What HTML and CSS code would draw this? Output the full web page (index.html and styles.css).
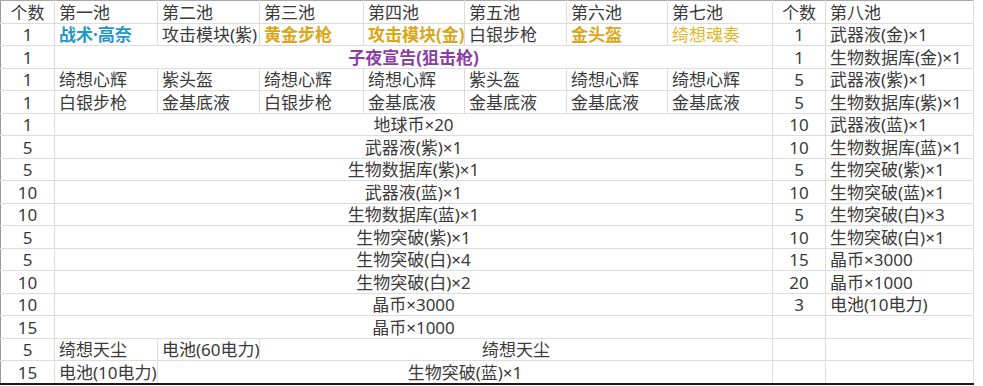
FILE: index.html
```html
<!DOCTYPE html>
<html lang="zh-CN">
<head>
    <meta charset="UTF-8">
    <meta name="viewport" content="width=device-width, initial-scale=1.0">
    <title>奖池</title>
    <link rel="stylesheet" href="styles.css">
</head>
<body>

<table class="sheet">
    <colgroup>
        <col class="c-num">
        <col class="c1"><col class="c2"><col class="c3"><col class="c4">
        <col class="c5"><col class="c6"><col class="c7">
        <col class="c-num2">
        <col class="c8">
    </colgroup>
    <tr>
        <td class="num">个数</td>
        <td>第一池</td><td>第二池</td><td>第三池</td><td>第四池</td>
        <td>第五池</td><td>第六池</td><td>第七池</td>
        <td class="num">个数</td><td>第八池</td>
    </tr>
    <tr>
        <td class="num">1</td>
        <td class="blue bold">战术·高奈</td>
        <td>攻击模块(紫)</td>
        <td class="gold bold">黄金步枪</td>
        <td class="gold bold">攻击模块(金)</td>
        <td>白银步枪</td>
        <td class="gold bold">金头盔</td>
        <td class="gold light">绮想魂奏</td>
        <td class="num">1</td><td>武器液(金)×1</td>
    </tr>
    <tr>
        <td class="num">1</td>
        <td colspan="7" class="mid purple bold">子夜宣告(狙击枪)</td>
        <td class="num">1</td><td>生物数据库(金)×1</td>
    </tr>
    <tr>
        <td class="num">1</td>
        <td>绮想心辉</td><td>紫头盔</td><td>绮想心辉</td><td>绮想心辉</td>
        <td>紫头盔</td><td>绮想心辉</td><td>绮想心辉</td>
        <td class="num">5</td><td>武器液(紫)×1</td>
    </tr>
    <tr>
        <td class="num">1</td>
        <td>白银步枪</td><td>金基底液</td><td>白银步枪</td><td>金基底液</td>
        <td>金基底液</td><td>金基底液</td><td>金基底液</td>
        <td class="num">5</td><td>生物数据库(紫)×1</td>
    </tr>
    <tr>
        <td class="num">1</td><td colspan="7" class="mid">地球币×20</td>
        <td class="num">10</td><td>武器液(蓝)×1</td>
    </tr>
    <tr>
        <td class="num">5</td><td colspan="7" class="mid">武器液(紫)×1</td>
        <td class="num">10</td><td>生物数据库(蓝)×1</td>
    </tr>
    <tr>
        <td class="num">5</td><td colspan="7" class="mid">生物数据库(紫)×1</td>
        <td class="num">5</td><td>生物突破(紫)×1</td>
    </tr>
    <tr>
        <td class="num">10</td><td colspan="7" class="mid">武器液(蓝)×1</td>
        <td class="num">10</td><td>生物突破(蓝)×1</td>
    </tr>
    <tr>
        <td class="num">10</td><td colspan="7" class="mid">生物数据库(蓝)×1</td>
        <td class="num">5</td><td>生物突破(白)×3</td>
    </tr>
    <tr>
        <td class="num">5</td><td colspan="7" class="mid">生物突破(紫)×1</td>
        <td class="num">10</td><td>生物突破(白)×1</td>
    </tr>
    <tr>
        <td class="num">5</td><td colspan="7" class="mid">生物突破(白)×4</td>
        <td class="num">15</td><td>晶币×3000</td>
    </tr>
    <tr>
        <td class="num">10</td><td colspan="7" class="mid">生物突破(白)×2</td>
        <td class="num">20</td><td>晶币×1000</td>
    </tr>
    <tr>
        <td class="num">10</td><td colspan="7" class="mid">晶币×3000</td>
        <td class="num">3</td><td>电池(10电力)</td>
    </tr>
    <tr>
        <td class="num">15</td><td colspan="7" class="mid">晶币×1000</td>
        <td class="num"></td><td></td>
    </tr>
    <tr>
        <td class="num">5</td>
        <td>绮想天尘</td>
        <td>电池(60电力)</td>
        <td colspan="5" class="mid">绮想天尘</td>
        <td class="num"></td><td></td>
    </tr>
    <tr class="last">
        <td class="num">15</td>
        <td>电池(10电力)</td>
        <td colspan="6" class="mid">生物突破(蓝)×1</td>
        <td class="num"></td><td></td>
    </tr>
</table>

</body>
</html>
```

FILE: styles.css
```css
body {
    margin: 0;
    background-color: #fff;
    font-family: "Noto Sans", "Noto Sans CJK SC", sans-serif;
}
.sheet {
    border-collapse: collapse;
    table-layout: fixed;
    width: 973px;
    font-size: 17px;
    color: #3a3a3a;
    border-left: 1px solid #9a9a9a;
    border-top: 1px solid #a8a8a8;
}
.sheet td {
    height: 21.5px;
    padding: 0 0 0 4px;
    line-height: 21px;
    white-space: nowrap;
    overflow: hidden;
    vertical-align: bottom;
    border-bottom: 1px solid #dcdcdc;
    border-right: 1px solid #dcdcdc;
}
.sheet .last td {
    border-bottom: 2px solid #1a1a1a;
}
.c-num { width: 54px; }
.c1 { width: 103px; }
.c2 { width: 102px; }
.c3 { width: 104px; }
.c4 { width: 101px; }
.c5 { width: 102px; }
.c6 { width: 101px; }
.c7 { width: 105px; }
.c-num2 { width: 53px; }
.c8 { width: 148px; }
.sheet td.num {
    text-align: center;
    padding: 0;
}
.sheet td.mid {
    text-align: center;
    padding: 0;
}
.bold {
    font-weight: bold;
}
.blue {
    color: #1f98c6;
}
.gold {
    color: #dca516;
}
.gold.light {
    color: #e3b52a;
}
.purple {
    color: #8a3ea6;
}
```
